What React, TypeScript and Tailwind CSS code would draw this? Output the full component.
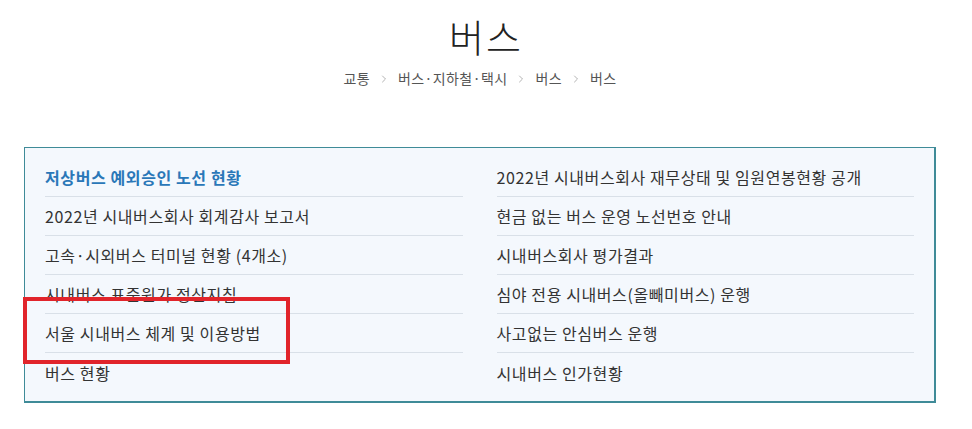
import { ChevronRight } from "lucide-react";

const LEFT = [
  "저상버스 예외승인 노선 현황",
  "2022년 시내버스회사 회계감사 보고서",
  "고속·시외버스 터미널 현황 (4개소)",
  "시내버스 표준원가 정산지침",
  "서울 시내버스 체계 및 이용방법",
  "버스 현황",
];

const RIGHT = [
  "2022년 시내버스회사 재무상태 및 임원연봉현황 공개",
  "현금 없는 버스 운영 노선번호 안내",
  "시내버스회사 평가결과",
  "심야 전용 시내버스(올빼미버스) 운행",
  "사고없는 안심버스 운행",
  "시내버스 인가현황",
];

const CRUMBS = ["교통", "버스·지하철·택시", "버스", "버스"];

function LinkColumn({ items, activeIndex }: { items: string[]; activeIndex?: number }) {
  return (
    <ul className="flex flex-col">
      {items.map((label, i) => (
        <li
          key={label}
          className={
            "h-[39px] flex items-center text-[16px] tracking-[0.6px] " +
            (i < items.length - 1 ? "border-b border-[#d9e0e8] " : "") +
            (i === activeIndex ? "text-[#2a77b8] font-bold" : "text-[#333333]")
          }
        >
          {label}
        </li>
      ))}
    </ul>
  );
}

export default function App() {
  return (
    <div
      className="w-[972px] h-[429px] bg-white relative overflow-hidden"
      style={{ fontFamily: '"Noto Sans CJK KR", "Noto Sans", sans-serif' }}
    >
      <div className="flex flex-col items-center pt-[12px]">
        <h1 className="text-[38px] leading-[48px] font-light tracking-[2px] text-[#222222]">버스</h1>
        <nav className="flex items-center mt-[8px] mr-[12px] text-[14px] tracking-[0.4px] text-[#555555]">
          {CRUMBS.map((c, i) => (
            <span key={i} className="flex items-center">
              {i > 0 && <ChevronRight className="w-[12px] h-[12px] text-[#999999] mx-[8px]" strokeWidth={1.5} />}
              <span>{c}</span>
            </span>
          ))}
        </nav>
      </div>

      <div className="mx-[24px] mt-[58px] w-[912px] h-[256px] bg-[#f4f8fd] border border-b-2 border-r-2 border-[#3f8b98] px-[20px] pt-[10px]">
        <div className="grid grid-cols-2 gap-x-[34px]">
          <LinkColumn items={LEFT} activeIndex={0} />
          <LinkColumn items={RIGHT} />
        </div>
      </div>

      {/* annotation overlay */}
      <div className="absolute left-[23px] top-[297px] w-[267px] h-[67px] border-4 border-[#e1242b]" />
    </div>
  );
}
